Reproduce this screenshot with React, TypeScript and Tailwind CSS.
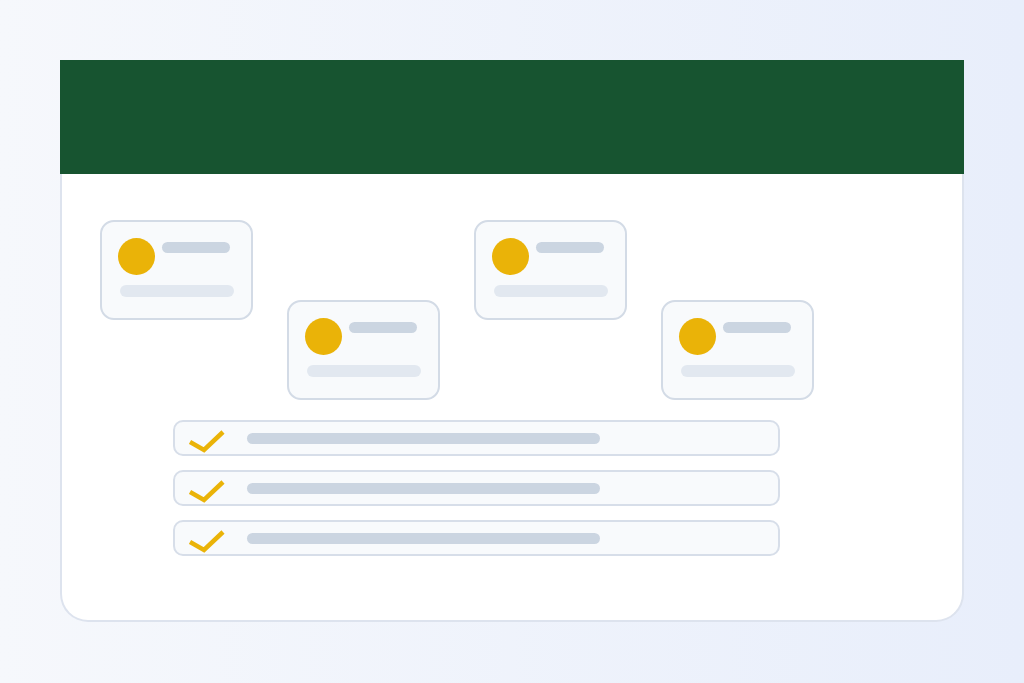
import React from "react";

type Card = { offset: boolean };

const cards: Card[] = [
  { offset: false },
  { offset: true },
  { offset: false },
  { offset: true },
];

function ProfileCard({ offset }: Card) {
  return (
    <div
      className={`relative w-[153px] h-[100px] shrink-0 rounded-[14px] border-2 border-[#d3dbe6] bg-[#f8fafc] ${
        offset ? "mt-[80px]" : ""
      }`}
    >
      <div className="flex items-start pl-[16px] pt-[16px]">
        <div className="w-[37px] h-[37px] rounded-full bg-[#eab308]" />
        <div className="ml-[7px] mt-[4px] w-[68px] h-[11px] rounded-full bg-[#cbd5e1]" />
      </div>
      <div className="ml-[18px] mt-[10px] w-[114px] h-[12px] rounded-full bg-[#e2e8f0]" />
    </div>
  );
}

function CheckRow() {
  return (
    <div className="flex items-center h-[36px] w-[607px] rounded-[10px] border-2 border-[#d7dee9] bg-[#f8fafc]">
      <svg
        width="38"
        height="32"
        viewBox="0 0 38 32"
        className="ml-[14px]"
        fill="none"
      >
        <path
          d="M1 20 L15 28 L34 10"
          stroke="#eab308"
          strokeWidth="4.5"
          strokeLinecap="butt"
          strokeLinejoin="miter"
        />
      </svg>
      <div className="ml-[20px] w-[353px] h-[11px] rounded-full bg-[#cbd5e1]" />
    </div>
  );
}

export default function App() {
  return (
    <div className="w-full h-[683px] bg-gradient-to-r from-[#f6f8fc] to-[#e8eefb] px-[60px] pt-[60px]">
      <div className="w-[904px] h-[562px] flex flex-col bg-white rounded-b-[28px] border-x-2 border-b-2 border-[#dde3ee]">
        {/* header band */}
        <div className="h-[114px] -mx-[2px] bg-[#175430]" />

        <div className="flex-1 pl-[38px] pt-[46px]">
          <div className="flex items-start gap-[34px]">
            {cards.map((c, i) => (
              <ProfileCard key={i} offset={c.offset} />
            ))}
          </div>

          <div className="ml-[73px] mt-[20px] flex flex-col gap-[14px]">
            <CheckRow />
            <CheckRow />
            <CheckRow />
          </div>
        </div>
      </div>
    </div>
  );
}
